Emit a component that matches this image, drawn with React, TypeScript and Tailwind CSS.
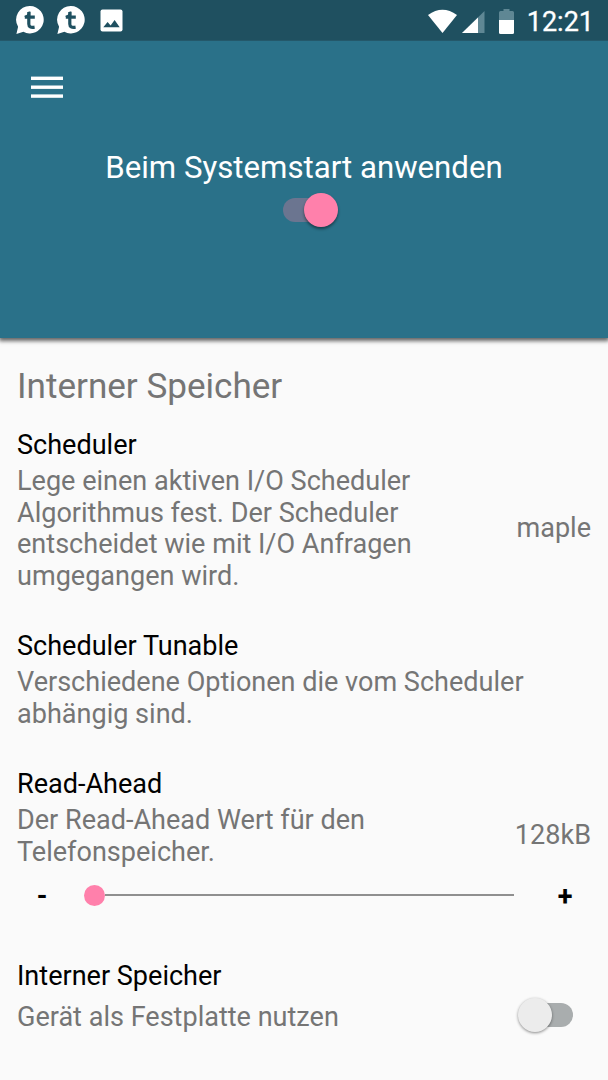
import { useState } from "react";

type ItemProps = {
  title: string;
  text: string;
  value?: string;
};

function ChatIcon() {
  return (
    <svg width="28" height="28" viewBox="0 0 28 28">
      <path
        fill="#fff"
        d="M14 0a13.7 13.7 0 1 1-6.6 25.7L.4 28l1.7-7.3A13.7 13.7 0 0 1 14 0z"
      />
      <path
        fill="none"
        stroke="#1f5060"
        strokeWidth="3.2"
        d="M12.8 6v12q0 4.2 5.8 3.2M8.8 11.2h10"
      />
      <path fill="#1f5060" d="M14.4 5.5v5H8.3v-.6q3.4-.6 4.3-4.4z" />
    </svg>
  );
}

function StatusBar() {
  return (
    <div className="flex h-[41px] items-center justify-between border-b border-[#24586a] bg-[#1f5060] pr-[14px] pl-4">
      <div className="flex items-center">
        <ChatIcon />
        <div className="ml-[13px]">
          <ChatIcon />
        </div>
        <svg className="ml-[15px]" width="23" height="23" viewBox="0 0 23 23">
          <rect x="0.5" y="0.5" width="22" height="22" rx="2" fill="#fff" />
          <path fill="#1f5060" d="M3.3 18.3l4.3-5.2 3 3.4 4-5.6 5.1 7.4z" />
        </svg>
      </div>
      <div className="flex items-center pt-px">
        <svg width="86" height="26" viewBox="0 0 86 26">
          <path fill="#fff" d="M14.5 25L0 7Q14.5-3.4 29 7z" />
          <path fill="#5f8794" d="M56.5 3v22H34z" />
          <path fill="#fff" d="M50 9.4V25H34z" />
          <path
            fill="#5f8794"
            d="M75.500 1h6v2h3a1.500 1.500 0 0 1 1.500 1.500V13H71V4.500A1.500 1.500 0 0 1 72.500 3h3z"
          />
          <path fill="#fff" d="M71 12h15v12.500a1.500 1.500 0 0 1-1.500 1.500h-12a1.500 1.500 0 0 1-1.500-1.500z" />
        </svg>
        <span className="ml-[13px] pt-[3px] text-[27px] leading-[37px] text-white [-webkit-text-stroke:0.3px_white]">
          12:21
        </span>
      </div>
    </div>
  );
}

function Item({ title, text, value }: ItemProps) {
  return (
    <div>
      <h3 className="leading-8 text-black">{title}</h3>
      <div className="mt-[5px] flex items-center justify-between">
        <p className={value ? "w-[420px]" : "w-[540px]"}>{text}</p>
        {value && <span className="pb-px">{value}</span>}
      </div>
    </div>
  );
}

export default function App() {
  const [onBoot, setOnBoot] = useState(true);
  const [massStorage, setMassStorage] = useState(false);

  return (
    <div className="flex h-[1080px] w-[608px] flex-col overflow-hidden bg-[#fafafa] font-[Roboto,sans-serif] text-[27.06px] leading-[31.7px] text-[#757575]">
      {/* Header */}
      <header className="h-[338px] shrink-0 bg-[#2a7189] shadow-[0_2px_4px_1px_rgba(0,0,0,0.6)]">
        <StatusBar />
        <button className="mt-[35px] ml-[31px] block h-[22px] w-8">
          <svg width="32" height="22" viewBox="0 0 32 22" fill="#fff">
            <rect y="0.6" width="32" height="3.4" />
            <rect y="9.5" width="32" height="3.4" />
            <rect y="18.4" width="32" height="3.4" />
          </svg>
        </button>
        <div className="mt-[52px] flex flex-col items-center">
          <span className="text-[31.2px] leading-9 text-white">Beim Systemstart anwenden</span>
          <button
            onClick={() => setOnBoot(!onBoot)}
            className={`mt-[7px] ml-[12px] flex h-[34px] w-[61px] items-center ${onBoot ? "" : "flex-row-reverse"}`}
          >
            <span className="ml-[3px] h-6 w-10 rounded-full bg-[#6b7590]" />
            <span className="-ml-[19px] size-[34px] shrink-0 rounded-full bg-[#ff80ab] shadow-[0_2px_3px_rgba(0,0,0,0.45)]" />
          </button>
        </div>
      </header>

      {/* Settings */}
      <main className="px-[17px] pt-[27.4px]">
        <h2 className="mb-[21.6px] text-[35.1px] leading-[42px]">Interner Speicher</h2>
        <Item
          title="Scheduler"
          text="Lege einen aktiven I/O Scheduler Algorithmus fest. Der Scheduler entscheidet wie mit I/O Anfragen umgegangen wird."
          value="maple"
        />
        <div className="mt-[37px]">
          <Item title="Scheduler Tunable" text="Verschiedene Optionen die vom Scheduler abhängig sind." />
        </div>
        <div className="mt-[37.6px]">
          <Item
            title="Read-Ahead"
            text="Der Read-Ahead Wert für den Telefonspeicher."
            value="128kB"
          />
        </div>

        {/* Slider */}
        <div className="mt-[11px] flex h-8 items-center text-black">
          <button className="w-[50px] pt-[3px] text-center font-bold">-</button>
          <div className="ml-[17px] flex w-[430px] items-center">
            <span className="size-[21px] rounded-full bg-[#ff80ab]" />
            <span className="h-[2px] flex-1 bg-[#8f8f8f]" />
          </div>
          <button className="ml-[26px] w-[50px] pt-[5px] text-center font-bold">+</button>
        </div>

        <h3 className="mt-[49px] leading-8 text-black">Interner Speicher</h3>
        <div className="mt-[5px] flex h-[36px] items-center justify-between">
          <p className="pt-[5px]">Gerät als Festplatte nutzen</p>
          <button
            onClick={() => setMassStorage(!massStorage)}
            className={`mr-[18px] flex items-center ${massStorage ? "flex-row-reverse" : ""}`}
          >
            <span className="z-10 size-[34px] rounded-full bg-[#ececec] shadow-[0_1px_3px_rgba(0,0,0,0.45)]" />
            <span className="-ml-[19px] h-6 w-10 rounded-full bg-[#a9adae]" />
          </button>
        </div>
      </main>
    </div>
  );
}
